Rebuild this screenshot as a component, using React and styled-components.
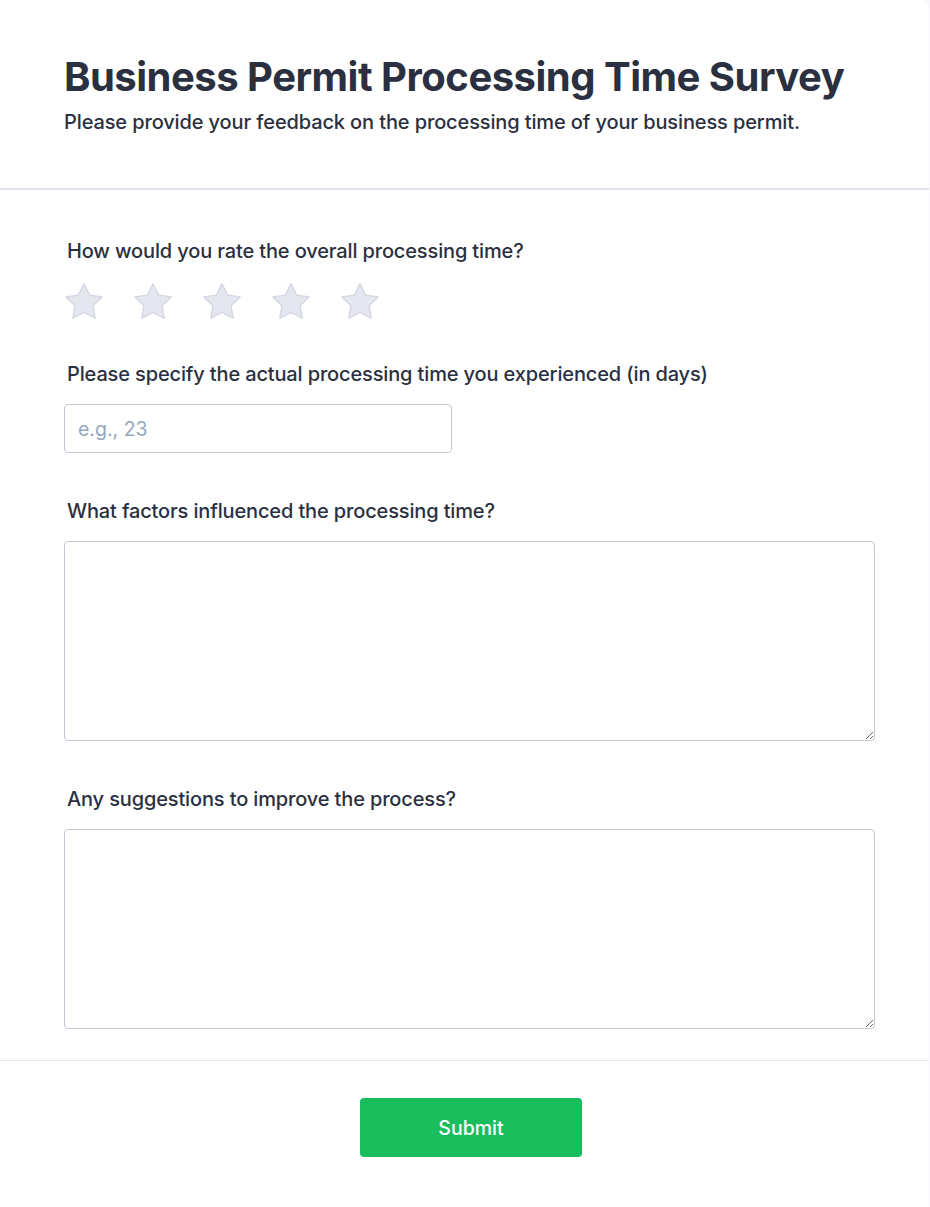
import React, { useState } from 'react';
import styled, { createGlobalStyle } from 'styled-components';

const GlobalStyle = createGlobalStyle`
  * { box-sizing: border-box; }
  body {
    margin: 0;
    background: #f6f7fb;
    font-family: Inter, "Noto Sans", sans-serif;
    color: #2b3040;
  }
`;

const Card = styled.div`
  width: 929px;
  min-height: 1207px;
  background: #ffffff;
  border-top-right-radius: 8px;
`;

const Header = styled.header`
  padding: 53px 64px 52px;
  border-bottom: 2px solid #e2e1ef;
`;

const Title = styled.h1`
  margin: 0 0 7px;
  font-size: 40px;
  line-height: 48px;
  font-weight: 700;
  letter-spacing: -0.5px;
  color: #2b3040;
`;

const Subtitle = styled.p`
  margin: 0;
  font-size: 20px;
  line-height: 28px;
  font-weight: 500;
  letter-spacing: -0.12px;
  color: #2b3040;
`;

const Body = styled.div`
  padding: 47px 54px 31px 64px;
  display: flex;
  flex-direction: column;
  gap: 44px;
`;

const Field = styled.div`
  display: flex;
  flex-direction: column;
  margin-bottom: ${(p) => (p.$tight ? -3 : 0)}px;
`;

const Label = styled.label`
  display: block;
  padding-left: 3px;
  margin-bottom: ${(p) => p.$gap || 16}px;
  font-size: 20px;
  line-height: 28px;
  font-weight: 500;
  letter-spacing: -0.14px;
  color: #2b3040;
`;

const Stars = styled.div`
  display: flex;
  gap: 31px;
  padding-left: 1px;
`;

const StarButton = styled.button`
  padding: 0;
  border: none;
  background: none;
  cursor: pointer;
  width: 38px;
  height: 36px;
  display: flex;
`;

const Input = styled.input`
  width: 388px;
  height: 49px;
  padding: 0 13px;
  border: 1px solid #c5c8d4;
  border-radius: 4px;
  font-family: inherit;
  font-size: 19.5px;
  font-weight: 400;
  color: #2b3040;
  outline: none;

  &::placeholder {
    color: #94a7bd;
  }
`;

const TextArea = styled.textarea`
  width: 811px;
  height: 200px;
  padding: 12px;
  border: 1px solid #c5c8d4;
  border-radius: 4px;
  font-family: inherit;
  font-size: 18px;
  color: #2b3040;
  outline: none;
  resize: vertical;
`;

const Footer = styled.div`
  border-top: 1px solid #e6e6f0;
  padding: 37px 0 50px;
  display: flex;
  justify-content: center;
`;

const SubmitButton = styled.button`
  width: 222px;
  height: 59px;
  margin-left: 13px;
  border: none;
  border-radius: 4px;
  background: #19bd5c;
  color: #ffffff;
  font-family: inherit;
  font-size: 19.5px;
  font-weight: 500;
  cursor: pointer;
`;

const Star = ({ filled }) => (
  <svg width="38" height="36" viewBox="2.2 2.2 19.6 18.7">
    <path
      d="M12 2.6l2.9 5.9 6.5.95-4.7 4.58 1.1 6.47L12 17.45l-5.8 3.05 1.1-6.47-4.7-4.58 6.5-.95z"
      fill={filled ? '#facc15' : '#e5e7f0'}
      stroke={filled ? '#eab308' : '#d3d6df'}
      strokeWidth="0.7"
      strokeLinejoin="round"
    />
  </svg>
);

const App = () => {
  const [rating, setRating] = useState(0);

  return (
    <>
      <GlobalStyle />
      <Card>
        <Header>
          <Title>Business Permit Processing Time Survey</Title>
          <Subtitle>Please provide your feedback on the processing time of your business permit.</Subtitle>
        </Header>
        <Body>
          <Field $tight>
            <Label $gap={18}>How would you rate the overall processing time?</Label>
            <Stars>
              {[1, 2, 3, 4, 5].map((n) => (
                <StarButton key={n} type="button" onClick={() => setRating(n)}>
                  <Star filled={n <= rating} />
                </StarButton>
              ))}
            </Stars>
          </Field>
          <Field>
            <Label>Please specify the actual processing time you experienced (in days)</Label>
            <Input type="number" placeholder="e.g., 23" />
          </Field>
          <Field>
            <Label>What factors influenced the processing time?</Label>
            <TextArea />
          </Field>
          <Field>
            <Label>Any suggestions to improve the process?</Label>
            <TextArea />
          </Field>
        </Body>
        <Footer>
          <SubmitButton type="button">Submit</SubmitButton>
        </Footer>
      </Card>
    </>
  );
};

export default App;
